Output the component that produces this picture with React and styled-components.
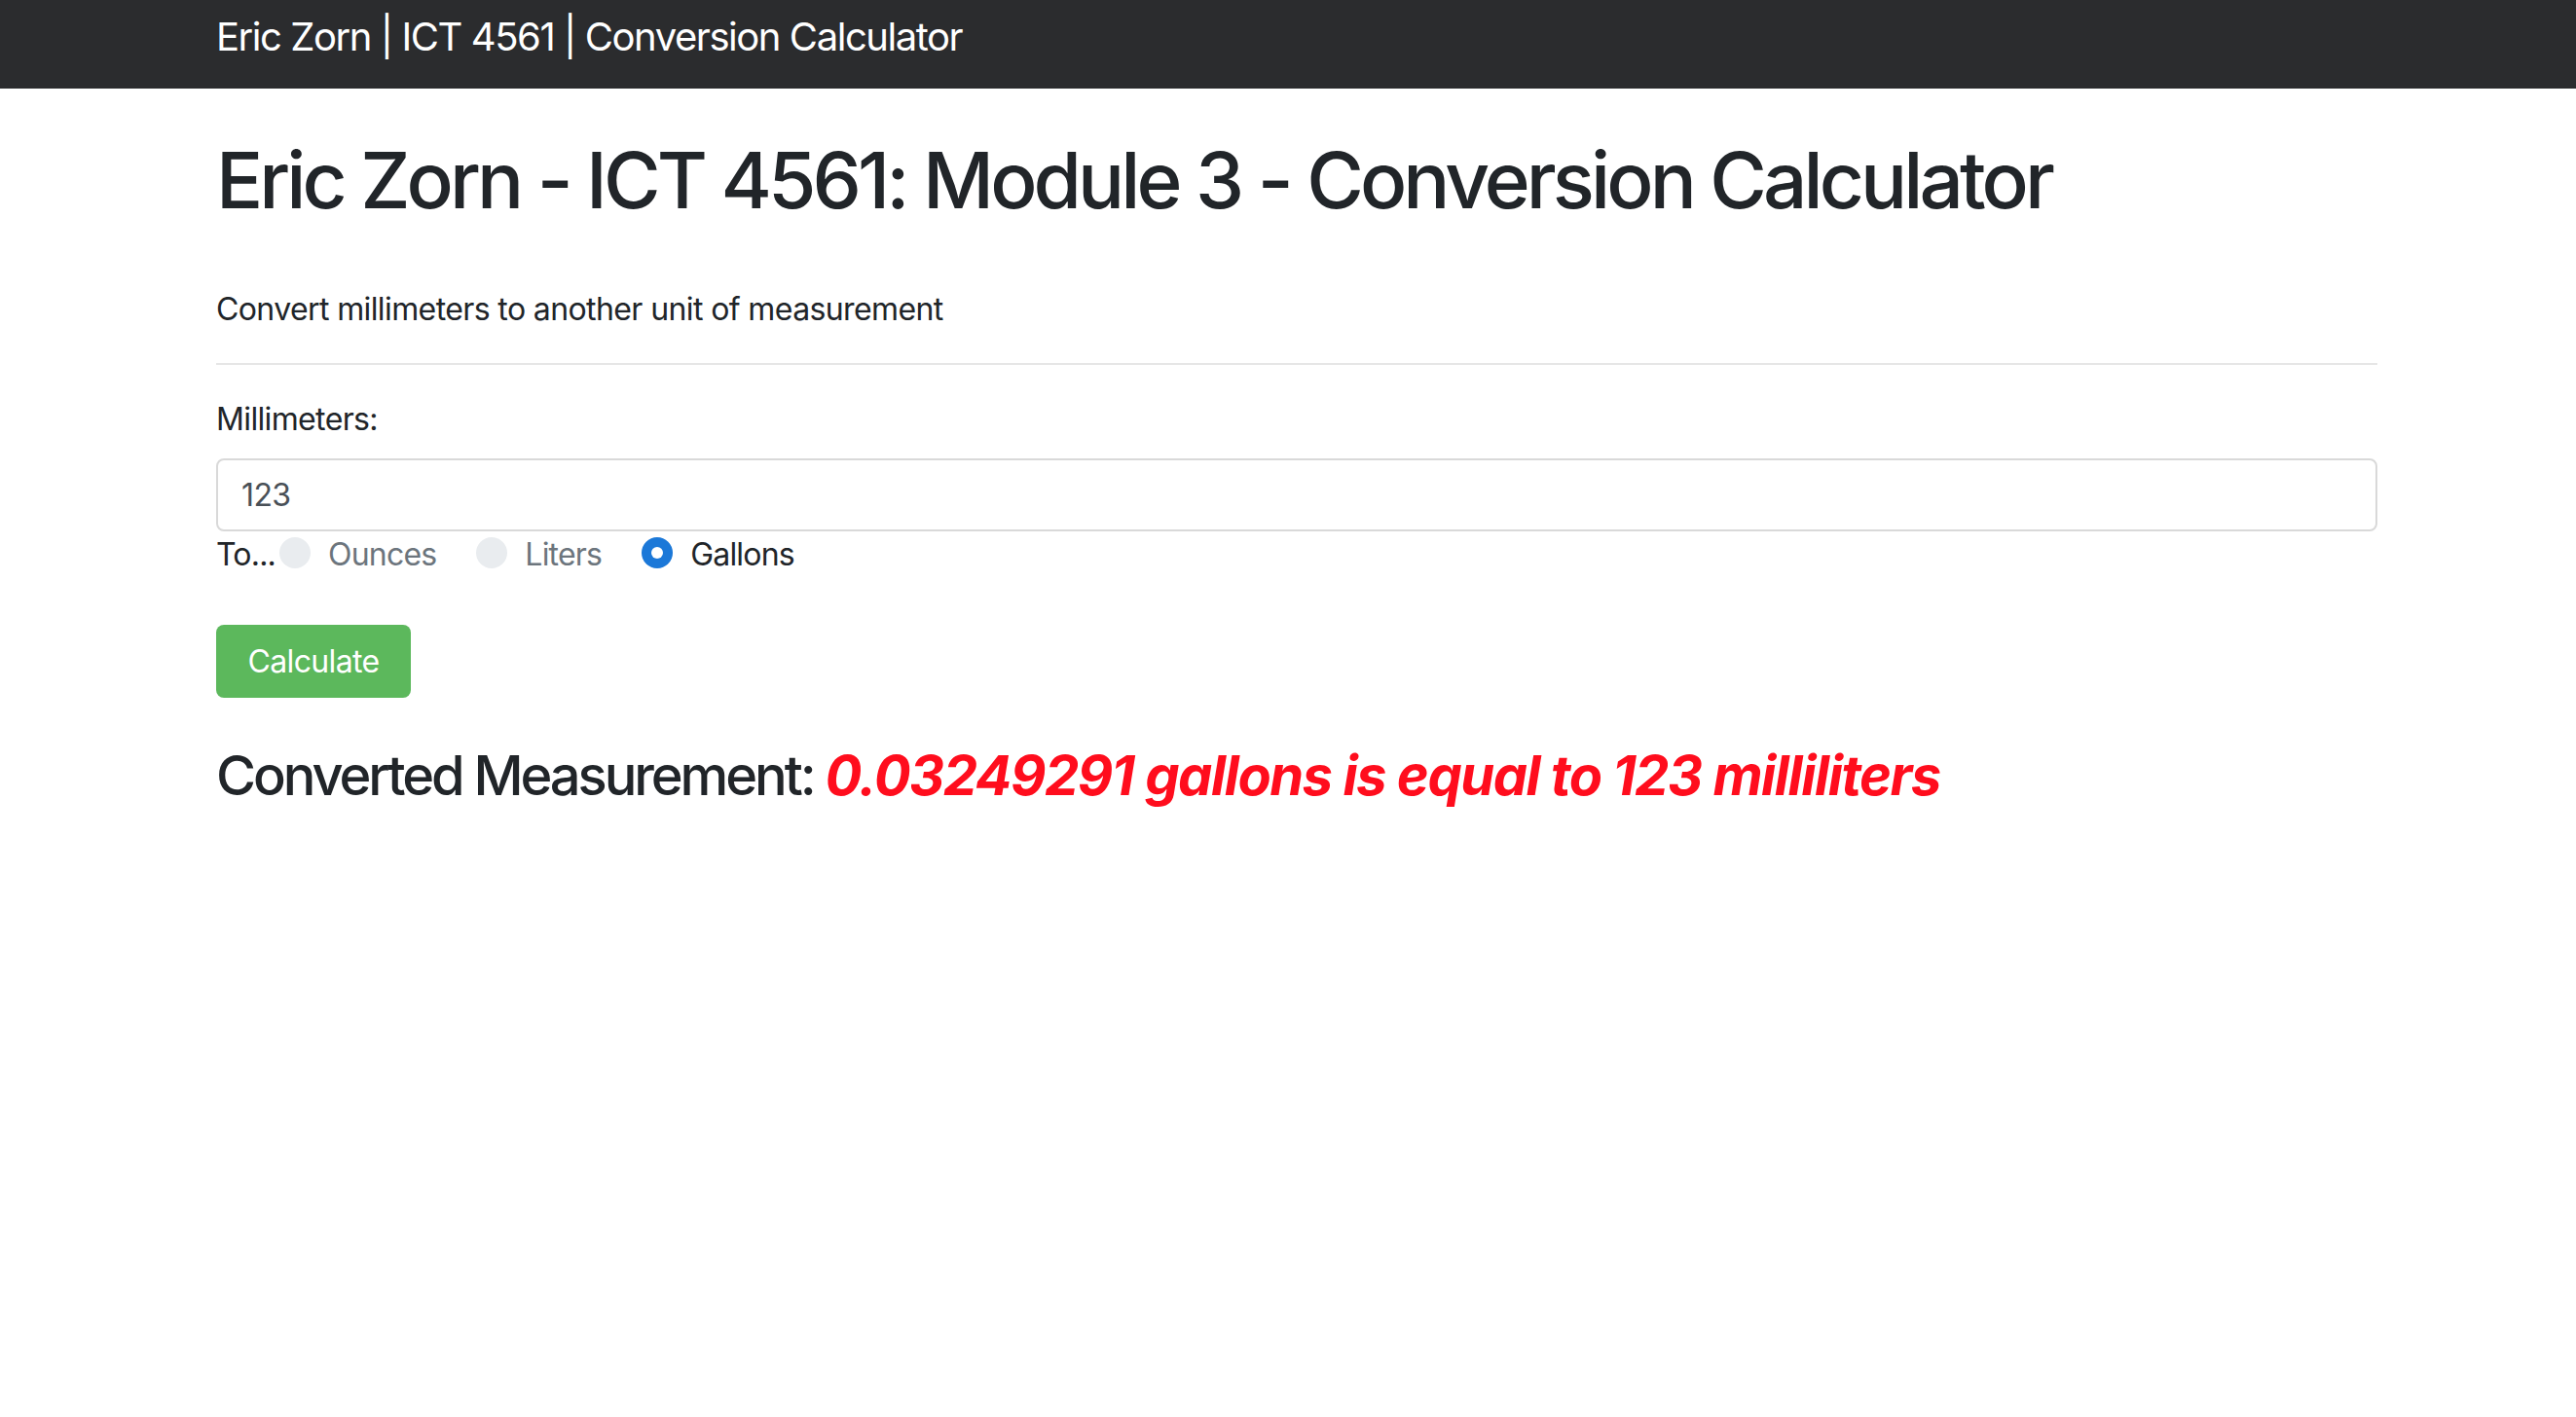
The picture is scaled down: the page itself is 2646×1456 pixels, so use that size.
import styled, { createGlobalStyle } from "styled-components";

const GlobalStyle = createGlobalStyle`
  body {
    margin: 0;
    background: #fff;
    font-family: Inter, "Noto Sans", "Liberation Sans", sans-serif;
    color: #212529;
  }
`;

const Navbar = styled.nav`
  height: 91px;
  background-color: #2b2c2e;
  display: flex;
  align-items: center;
`;

const Container = styled.div`
  width: 2220px;
  margin-left: 222px;
`;

const Brand = styled.span`
  color: #fff;
  font-size: 40px;
  letter-spacing: -0.036em;
  line-height: 60px;
  padding-bottom: 16px;
  display: block;
`;

const Title = styled.h1`
  margin: 46px 0 61px;
  font-size: 80px;
  font-weight: 500;
  letter-spacing: -0.049em;
  line-height: 1.2;
`;

const Lead = styled.p`
  margin: 0 0 31px;
  font-size: 32px;
  letter-spacing: -0.019em;
  line-height: 48px;
`;

const Rule = styled.hr`
  margin: 0 0 32px;
  border: 0;
  border-top: 2px solid #e6e6e6;
`;

const Label = styled.label`
  display: block;
  margin-bottom: 16px;
  font-size: 32px;
  letter-spacing: -0.02em;
  line-height: 48px;
`;

const TextInput = styled.input`
  display: block;
  box-sizing: border-box;
  width: 100%;
  height: 75px;
  padding: 0 24px;
  font-family: inherit;
  font-size: 32px;
  letter-spacing: -0.02em;
  color: #495057;
  border: 2px solid #d9d9d9;
  border-radius: 8px;
  outline: none;
`;

const RadioRow = styled.div`
  display: flex;
  align-items: center;
  height: 48px;
  font-size: 32px;
  letter-spacing: -0.025em;
  line-height: 48px;
`;

const RadioOption = styled.label`
  display: flex;
  align-items: center;
  gap: 18px;
  margin-left: ${(p) => (p.first ? "4px" : "41px")};
  color: ${(p) => (p.checked ? "#212529" : "#6c757d")};
`;

const Dot = styled.span`
  width: 32px;
  height: 32px;
  border-radius: 50%;
  margin-top: -4px;
  background: ${(p) => (p.checked ? "#1b78d8" : "#e9ecef")};
  display: flex;
  align-items: center;
  justify-content: center;
  &::after {
    content: "";
    width: 12px;
    height: 12px;
    border-radius: 50%;
    background: #fff;
    display: ${(p) => (p.checked ? "block" : "none")};
  }
`;

const Button = styled.button`
  margin-top: 48px;
  width: 200px;
  height: 75px;
  border: 0;
  border-radius: 8px;
  background-color: #5cb85c;
  color: #fff;
  font-family: inherit;
  font-size: 32px;
  letter-spacing: -0.02em;
  cursor: pointer;
`;

const Result = styled.h3`
  margin: 47px 0 0;
  font-size: 56px;
  font-weight: 500;
  letter-spacing: -0.055em;
  line-height: 1.2;
`;

const Answer = styled.em`
  color: #ff0d1d;
  font-weight: 700;
  letter-spacing: -0.026em;
`;

const units = ["Ounces", "Liters", "Gallons"];

export default function App() {
  const selected = "Gallons";
  return (
    <>
      <GlobalStyle />
      <Navbar>
        <Container>
          <Brand>Eric Zorn | ICT 4561 | Conversion Calculator</Brand>
        </Container>
      </Navbar>
      <Container>
        <Title>Eric Zorn - ICT 4561: Module 3 - Conversion Calculator</Title>
        <Lead>Convert millimeters to another unit of measurement</Lead>
        <Rule />
        <Label htmlFor="mm">Millimeters:</Label>
        <TextInput id="mm" defaultValue="123" />
        <RadioRow>
          To...
          {units.map((u, i) => (
            <RadioOption key={u} first={i === 0} checked={u === selected}>
              <Dot checked={u === selected} />
              {u}
            </RadioOption>
          ))}
        </RadioRow>
        <Button>Calculate</Button>
        <Result>
          Converted Measurement:{" "}
          <Answer>0.03249291 gallons is equal to 123 milliliters</Answer>
        </Result>
      </Container>
    </>
  );
}
